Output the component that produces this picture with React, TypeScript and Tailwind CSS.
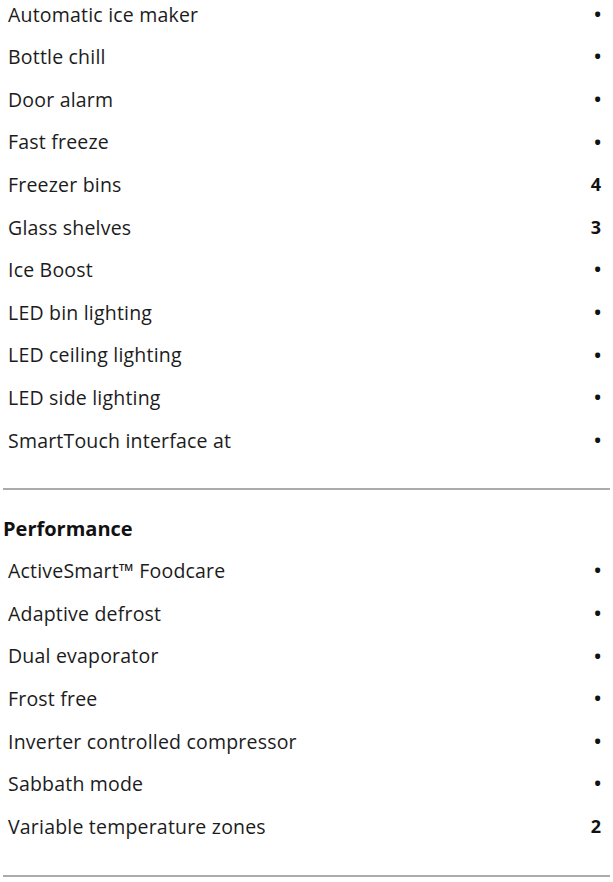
import React from 'react';

type Spec = { label: string; value?: string };

const features: Spec[] = [
  { label: 'Automatic ice maker' },
  { label: 'Bottle chill' },
  { label: 'Door alarm' },
  { label: 'Fast freeze' },
  { label: 'Freezer bins', value: '4' },
  { label: 'Glass shelves', value: '3' },
  { label: 'Ice Boost' },
  { label: 'LED bin lighting' },
  { label: 'LED ceiling lighting' },
  { label: 'LED side lighting' },
  { label: 'SmartTouch interface at' },
];

const performance: Spec[] = [
  { label: 'ActiveSmart™ Foodcare' },
  { label: 'Adaptive defrost' },
  { label: 'Dual evaporator' },
  { label: 'Frost free' },
  { label: 'Inverter controlled compressor' },
  { label: 'Sabbath mode' },
  { label: 'Variable temperature zones', value: '2' },
];

const SpecRow: React.FC<Spec> = ({ label, value }) => (
  <div className="flex h-[42.6px] items-center justify-between pl-2 pr-3">
    <span className="text-[19.5px] tracking-[0.2px] text-[#1c1c1c]">{label}</span>
    <span className="text-[18px] font-bold text-[#111]">{value ?? '•'}</span>
  </div>
);

export default function App() {
  return (
    <div className="min-h-screen bg-white font-['Open_Sans',sans-serif] text-[#1c1c1c]">
      <div className="-mt-[7px]">
        {features.map((f) => (
          <SpecRow key={f.label} {...f} />
        ))}
      </div>

      <div className="mx-[3px] mt-[26px] h-[2px] bg-[#ababab]" />

      <h3 className="mt-[25px] pl-[3px] text-[20px] font-bold leading-[28px] text-[#111]">Performance</h3>

      <div className="mt-[7px]">
        {performance.map((f) => (
          <SpecRow key={f.label} {...f} />
        ))}
      </div>

      <div className="mx-[3px] mt-[27px] h-[2px] bg-[#ababab]" />
    </div>
  );
}
